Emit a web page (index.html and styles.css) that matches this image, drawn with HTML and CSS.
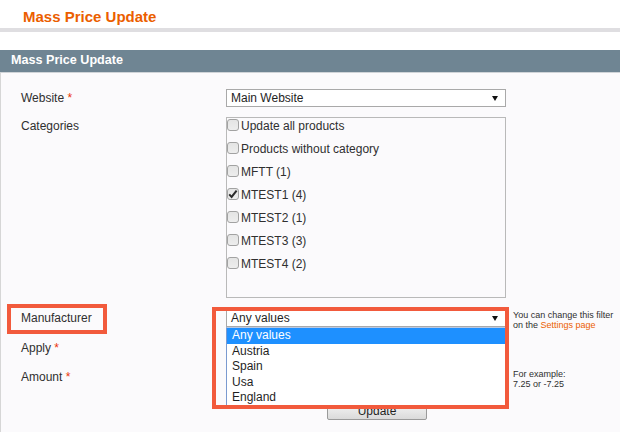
FILE: index.html
```html
<html>
  <head>
    <title>Mass Price Update</title>
    <link rel="stylesheet" href="styles.css">
  </head>
  <body>
    <div class="page-head">
      <h3>Mass Price Update</h3>
    </div>

    <div class="fieldset-head">Mass Price Update</div>
    <div class="fieldset">
      <div class="row row-website">
        <div class="label">Website <span class="required">*</span></div>
        <div class="value">
          <div class="select">Main Website<span class="arrow"></span></div>
        </div>
      </div>

      <div class="row row-categories">
        <div class="label">Categories</div>
        <div class="value">
          <div class="tree">
            <div class="item"><span class="check"></span>Update all products</div>
            <div class="item"><span class="check"></span>Products without category</div>
            <div class="item"><span class="check"></span>MFTT (1)</div>
            <div class="item">
              <span class="check checked">
                <svg width="12" height="12" viewBox="0 0 12 12"><path d="M2.2 6.4 L4.6 8.9 L9.6 2.6" fill="none" stroke="#2b2b2b" stroke-width="2"/></svg>
              </span>MTEST1 (4)
            </div>
            <div class="item"><span class="check"></span>MTEST2 (1)</div>
            <div class="item"><span class="check"></span>MTEST3 (3)</div>
            <div class="item"><span class="check"></span>MTEST4 (2)</div>
          </div>
        </div>
      </div>

      <div class="row row-manufacturer">
        <div class="label">
          Manufacturer
          <span class="callout callout-label"></span>
        </div>
        <div class="value">
          <div class="select">Any values<span class="arrow"></span></div>
          <ul class="options">
            <li class="selected">Any values</li>
            <li>Austria</li>
            <li>Spain</li>
            <li>Usa</li>
            <li>England</li>
          </ul>
          <span class="callout callout-select"></span>
        </div>
        <div class="hint">You can change this filter<br />on the <a href="#">Settings page</a></div>
      </div>

      <div class="row row-apply">
        <div class="label">Apply <span class="required">*</span></div>
        <div class="value">
          <div class="select"><span class="arrow"></span></div>
        </div>
      </div>

      <div class="row row-amount">
        <div class="label">Amount <span class="required">*</span></div>
        <div class="value">
          <input type="text" class="input-text" />
        </div>
        <div class="hint">For example:<br />7.25 or -7.25</div>
      </div>

      <div class="row row-button">
        <div class="label"></div>
        <div class="value">
          <button type="button" class="button">Update</button>
        </div>
      </div>
    </div>
  </body>
</html>
```

FILE: styles.css
```css
/* Page basics */
body {
  margin: 0;
  background-color: #fff;
  color: #2f2f2f;
  font-family: "Liberation Sans", Arial, sans-serif;
  font-size: 12px;
}

/* Top title */
.page-head {
  height: 28px;
  padding-left: 23px;
  border-bottom: 4px solid #dfdee1;
  box-sizing: content-box;
}
.page-head h3 {
  margin: 0;
  padding-top: 8px;
  font-size: 15px;
  line-height: 18px;
  color: #eb5e00;
}

/* Fieldset header and body */
.fieldset-head {
  margin-top: 18px;
  height: 22px;
  padding-left: 11px;
  background-color: #6f8593;
  border-bottom: 1px solid #d0d4d8;
  color: #fff;
  font-size: 12.6px;
  font-weight: bold;
  line-height: 21px;
}
.fieldset {
  background-color: #fbfafc;
  border-left: 1px solid #d6d6d6;
  border-bottom: 1px solid #d6d6d6;
  padding: 16px 0 13px 20px;
}

/* Form rows */
.row {
  display: flex;
  align-items: flex-start;
}
.label {
  position: relative;
  width: 205px;
  line-height: 18px;
}
.required {
  color: #eb340a;
}
.value {
  position: relative;
  width: 280px;
}
.hint {
  margin-left: 7px;
  margin-top: 1px;
  font-size: 9px;
  line-height: 10px;
  color: #2f2f2f;
}
.hint a {
  color: #eb5e00;
  text-decoration: none;
}
.row-website {
  margin-bottom: 10px;
}
.row-categories {
  margin-bottom: 11px;
}
.row-manufacturer {
  margin-bottom: 9px;
}
.row-apply {
  margin-bottom: 11px;
}
.row-amount {
  margin-bottom: 14px;
}
.row-amount .hint {
  margin-top: 1px;
}

/* Select boxes */
.select {
  position: relative;
  height: 18px;
  box-sizing: border-box;
  border: 1px solid #a9a9a9;
  background-color: #fff;
  padding-left: 4px;
  line-height: 16px;
  color: #1f1f1f;
}
.arrow {
  position: absolute;
  right: 7px;
  top: 6px;
  width: 0;
  height: 0;
  border-left: 3px solid transparent;
  border-right: 3px solid transparent;
  border-top: 5px solid #111;
}
.options {
  position: absolute;
  z-index: 2;
  top: 18px;
  left: 0;
  width: 280px;
  box-sizing: border-box;
  margin: 0;
  padding: 0;
  list-style: none;
  background-color: #fff;
  border: 1px solid #7a9ad0;
  border-top-color: #b9c9e4;
}
.options li {
  padding-left: 5px;
  line-height: 15.5px;
  color: #1f1f1f;
}
.options li.selected {
  background-color: #1e90ff;
  color: #fff;
}

/* Category tree */
.tree {
  height: 181px;
  box-sizing: border-box;
  border: 1px solid #b9b9b9;
  padding-top: 1px;
}
.item {
  display: flex;
  align-items: flex-start;
  height: 23px;
  line-height: 14px;
}
.check {
  display: inline-block;
  width: 12px;
  height: 12px;
  box-sizing: border-box;
  margin-right: 2px;
  border: 1px solid #a2a2a2;
  border-radius: 3px;
  background: linear-gradient(#e4e4e4, #ededed);
  position: relative;
}
.check svg {
  position: absolute;
  left: -1px;
  top: -1px;
}

/* Inputs and button */
.input-text {
  width: 280px;
  height: 18px;
  box-sizing: border-box;
  border: 1px solid #a9a9a9;
  background-color: #fff;
}
.row-button .value {
  height: 17px;
}
.button {
  margin-left: 101px;
  width: 100px;
  height: 17px;
  border: 1px solid #9a9a9a;
  border-radius: 2px;
  background: linear-gradient(#f4f4f4, #dadada);
  font-family: "Liberation Sans", Arial, sans-serif;
  font-size: 12px;
  line-height: 13px;
  color: #1f1f1f;
  padding: 0;
}

/* Red highlight frames */
.callout {
  position: absolute;
  z-index: 3;
  box-sizing: border-box;
  border: 4px solid #f25a3c;
}
.callout-label {
  left: -14px;
  top: -5px;
  width: 100px;
  height: 30px;
}
.callout-select {
  left: -14px;
  top: -2px;
  width: 297px;
  height: 102px;
}
```
